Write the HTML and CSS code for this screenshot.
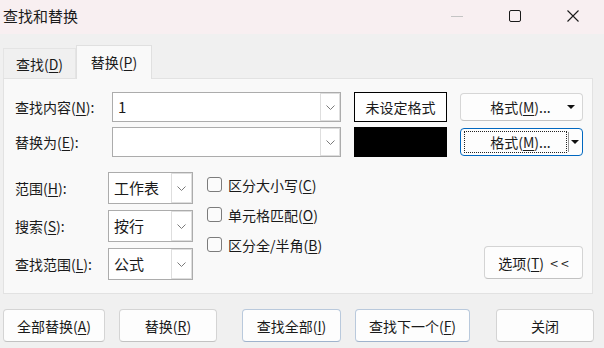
FILE: index.html
```html
<!DOCTYPE html>
<html lang="zh">
<head>
    <meta charset="UTF-8">
    <title>查找和替换</title>
    <link rel="stylesheet" href="styles.css">
</head>
<body>
    <div class="titlebar">
        <div class="title">查找和替换</div>
        <div class="win-controls">
            <div class="win-btn">
                <svg width="12" height="12" viewBox="0 0 12 12"><line x1="0" y1="6.5" x2="12" y2="6.5" stroke="#c4c4c4" stroke-width="1"/></svg>
            </div>
            <div class="win-btn">
                <svg width="12" height="12" viewBox="0 0 12 12"><rect x="0.5" y="0.5" width="11" height="11" rx="1.5" fill="none" stroke="#1a1a1a" stroke-width="1"/></svg>
            </div>
            <div class="win-btn">
                <svg width="12" height="12" viewBox="0 0 12 12"><path d="M0.5 0.5 L11.5 11.5 M11.5 0.5 L0.5 11.5" stroke="#1a1a1a" stroke-width="1.1"/></svg>
            </div>
        </div>
    </div>

    <div class="tabs">
        <div class="tab">查找(<u>D</u>)</div>
        <div class="tab active">替换(<u>P</u>)</div>
    </div>

    <div class="panel">
        <!-- 查找 / 替换 输入行 -->
        <div class="row">
            <div class="label">查找内容(<u>N</u>):</div>
            <div class="combo wide">
                <span class="combo-text">1</span>
                <span class="combo-drop"><svg width="9" height="5" viewBox="0 0 9 5"><polyline points="0.5,0.5 4.5,4.5 8.5,0.5" fill="none" stroke="#7a7a7a"/></svg></span>
            </div>
            <div class="fmt-box">未设定格式</div>
            <div class="fmt-btn">
                <span class="fmt-text">格式(<u>M</u>)...</span>
                <span class="arrow"><svg width="8" height="4" viewBox="0 0 8 4"><polygon points="0,0 8,0 4,4" fill="#111"/></svg></span>
            </div>
        </div>
        <div class="row">
            <div class="label">替换为(<u>E</u>):</div>
            <div class="combo wide">
                <span class="combo-text"></span>
                <span class="combo-drop"><svg width="9" height="5" viewBox="0 0 9 5"><polyline points="0.5,0.5 4.5,4.5 8.5,0.5" fill="none" stroke="#7a7a7a"/></svg></span>
            </div>
            <div class="fmt-box black"></div>
            <div class="fmt-btn focused">
                <span class="focus-rect"><span>格式(<u>M</u>)...</span></span>
                <span class="sep"></span>
                <span class="arrow"><svg width="8" height="4" viewBox="0 0 8 4"><polygon points="0,0 8,0 4,4" fill="#111"/></svg></span>
            </div>
        </div>

        <!-- 选项区域 -->
        <div class="options">
            <div class="opt-grid">
                <div class="label">范围(<u>H</u>):</div>
                <div class="combo">
                    <span class="combo-text">工作表</span>
                    <span class="combo-drop"><svg width="9" height="5" viewBox="0 0 9 5"><polyline points="0.5,0.5 4.5,4.5 8.5,0.5" fill="none" stroke="#7a7a7a"/></svg></span>
                </div>
                <div class="label">搜索(<u>S</u>):</div>
                <div class="combo">
                    <span class="combo-text">按行</span>
                    <span class="combo-drop"><svg width="9" height="5" viewBox="0 0 9 5"><polyline points="0.5,0.5 4.5,4.5 8.5,0.5" fill="none" stroke="#7a7a7a"/></svg></span>
                </div>
                <div class="label">查找范围(<u>L</u>):</div>
                <div class="combo">
                    <span class="combo-text">公式</span>
                    <span class="combo-drop"><svg width="9" height="5" viewBox="0 0 9 5"><polyline points="0.5,0.5 4.5,4.5 8.5,0.5" fill="none" stroke="#7a7a7a"/></svg></span>
                </div>
            </div>
            <div class="checks">
                <div class="check"><span class="box"></span><span>区分大小写(<u>C</u>)</span></div>
                <div class="check"><span class="box"></span><span>单元格匹配(<u>O</u>)</span></div>
                <div class="check"><span class="box"></span><span>区分全/半角(<u>B</u>)</span></div>
            </div>
            <div class="btn opt-btn"><span>选项(<u>T</u>) <span class="chev">&lt;&lt;</span></span></div>
        </div>
    </div>

    <div class="actions">
        <div class="btn act w1"><span>全部替换(<u>A</u>)</span></div>
        <div class="btn act w2"><span>替换(<u>R</u>)</span></div>
        <div class="btn act w3 blue"><span>查找全部(<u>I</u>)</span></div>
        <div class="btn act w4 blue"><span>查找下一个(<u>F</u>)</span></div>
        <div class="btn act w5"><span>关闭</span></div>
    </div>
</body>
</html>
```

FILE: styles.css
```css
body {
    margin: 0;
    width: 604px;
    height: 348px;
    overflow: hidden;
    background: #f0f0f0;
    color: #1a1a1a;
    font-family: "Noto Sans CJK SC", "Liberation Sans", sans-serif;
    font-size: 14px;
    line-height: 20px;
}

u {
    text-underline-offset: 2px;
}

/* 标题栏 */
.titlebar {
    height: 34px;
    background: #f8eff1;
    display: flex;
    align-items: center;
}

.title {
    flex: 1;
    padding-left: 3px;
    font-size: 15px;
    margin-top: -2px;
}

.win-controls {
    display: flex;
    margin-right: 2px;
}

.win-btn {
    width: 58px;
    height: 34px;
    display: flex;
    align-items: center;
    justify-content: center;
    margin-top: -2px;
}

/* 选项卡 */
.tabs {
    display: flex;
    align-items: flex-end;
    height: 33px;
    margin: 11px 0 0 3px;
}

.tab {
    width: 73px;
    height: 30px;
    box-sizing: border-box;
    border: 1px solid #e4e4e4;
    border-bottom: none;
    display: flex;
    align-items: center;
    justify-content: center;
}

.tab.active {
    position: relative;
    width: 76px;
    height: 34px;
    margin-bottom: -1px;
    background: #f9f9f9;
    border-color: #e0e0e0;
    padding-bottom: 1px;
}

.panel {
    height: 216px;
    margin: 0 11px 0 3px;
    box-sizing: border-box;
    border: 1px solid #e2e2e2;
    background: #f9f9f9;
    padding: 13px 9px 0 11px;
}

.row {
    display: flex;
    align-items: center;
    height: 30px;
}

.row + .row {
    margin-top: 5px;
}

.row .label {
    width: 97px;
}

/* 下拉框 */
.combo {
    display: flex;
    height: 100%;
    box-sizing: border-box;
    border: 1px solid #acacac;
    background: #fff;
}

.combo.wide {
    width: 229px;
}

.combo-text {
    flex: 1;
    padding-left: 5px;
    display: flex;
    align-items: center;
    font-size: 15px;
}

.combo-drop {
    width: 20px;
    box-sizing: border-box;
    border: 1px solid #dedede;
    display: flex;
    align-items: center;
    justify-content: center;
}

.fmt-box {
    margin-left: 13px;
    width: 93px;
    height: 30px;
    box-sizing: border-box;
    border: 1px solid #000;
    background: #fff;
    display: flex;
    align-items: center;
    justify-content: center;
}

.fmt-box.black {
    background: #000;
}

.fmt-btn {
    margin-left: 13px;
    width: 123px;
    height: 28px;
    box-sizing: border-box;
    border: 1px solid #d6d6d6;
    border-bottom-color: #c4c4c4;
    border-radius: 4px;
    background: #fdfdfd;
    display: flex;
    align-items: center;
    padding-left: 18px;
}

.fmt-text {
    flex: 1;
    text-align: center;
}

.arrow {
    width: 18px;
    display: flex;
    align-items: center;
    justify-content: center;
    padding-right: 2px;
}

.fmt-btn.focused {
    border-color: #0067c0;
    padding: 2px 0 2px 3px;
}

.focus-rect {
    flex: 1;
    align-self: stretch;
    border: 1px dotted #222;
    display: flex;
    align-items: center;
    justify-content: center;
    padding-left: 10px;
}

.sep {
    width: 1px;
    height: 20px;
    margin-left: 1px;
    background: #9a9a9a;
}

.fmt-btn.focused .arrow {
    width: 12px;
    padding-right: 1px;
}

/* 选项区域 */
.options {
    display: flex;
    margin-top: 15px;
}

.opt-grid {
    display: grid;
    grid-template-columns: 93px 85px;
    grid-auto-rows: 32px;
    row-gap: 6px;
    align-items: center;
}

.opt-grid .combo {
    height: 32px;
}

.opt-grid .combo-drop {
    width: 21px;
}

.checks {
    flex: 1;
    display: flex;
    flex-direction: column;
    gap: 15px;
    padding: 5px 0 0 14px;
}

.check {
    height: 15px;
    display: flex;
    align-items: center;
    gap: 6px;
}

.box {
    width: 15px;
    height: 15px;
    box-sizing: border-box;
    border: 1px solid #7c7c7c;
    border-radius: 3px;
    background: #fbfbfb;
}

.btn {
    box-sizing: border-box;
    border: 1px solid #d4d4d4;
    border-bottom-color: #c2c2c2;
    border-radius: 4px;
    background: #fdfdfd;
    display: flex;
    align-items: center;
    justify-content: center;
    white-space: nowrap;
}

.opt-btn {
    flex-shrink: 0;
    align-self: flex-end;
    width: 99px;
    height: 33px;
    margin-bottom: 1px;
}

.chev {
    margin-left: 3px;
    letter-spacing: 3px;
    margin-right: -3px;
}

/* 底部按钮 */
.actions {
    display: flex;
    margin-top: 15px;
    padding-left: 3px;
}

.act {
    height: 33px;
}

.w1 { width: 102px; }
.w2 { width: 98px; margin-left: 14px; }
.w3 { width: 99px; margin-left: 25px; }
.w4 { width: 115px; margin-left: 14px; }
.w5 { width: 98px; margin-left: 26px; }

.act.blue {
    border-color: #b9c9dc;
    border-bottom-color: #9fb3cc;
}
```
